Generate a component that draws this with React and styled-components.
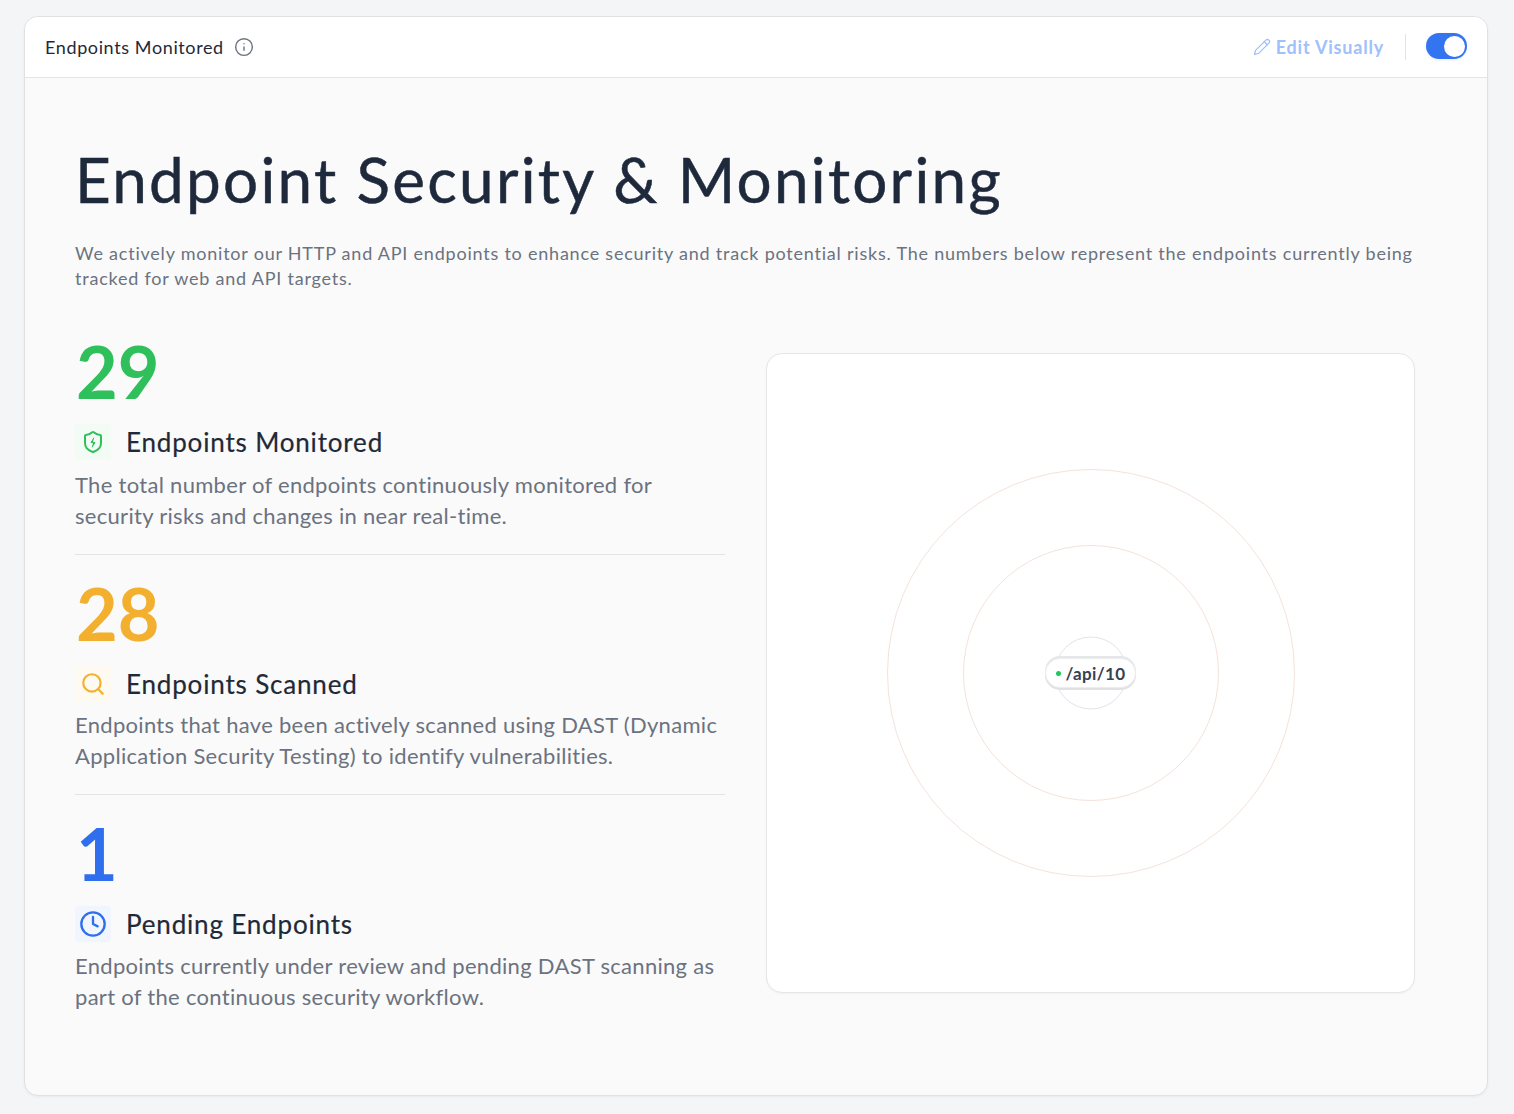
import React from "react";
import styled, { createGlobalStyle } from "styled-components";
import { Info, Pencil, Search, Clock } from "lucide-react";

const Global = createGlobalStyle`
  html, body { margin: 0; padding: 0; background: #f4f5f7; }
  body { font-family: "Lato", "Open Sans", sans-serif; }
`;
const Page = styled.div`
  padding: 16px 26px 18px 24px;
  height: 1114px;
  box-sizing: border-box;
`;
const Card = styled.section`
  height: 1080px;
  box-sizing: border-box;
  border: 1px solid #dfe1e5;
  border-radius: 14px;
  background: #fafafa;
  box-shadow: 0 1px 3px rgba(0,0,0,.05);
  overflow: hidden;
  display: flex;
  flex-direction: column;
`;
const Header = styled.header`
  height: 61px;
  box-sizing: border-box;
  flex: none;
  background: #fff;
  border-bottom: 1px solid #e2e4e8;
  display: flex;
  align-items: center;
  justify-content: space-between;
  padding: 0 20px;
`;
const HeaderTitle = styled.div`
  display: flex;
  align-items: center;
  gap: 10px;
  font-size: 18px;
  color: #1f2937;
  letter-spacing: 0.62px;
  svg { color: #6b7280; }
`;
const HeaderActions = styled.div`
  display: flex;
  align-items: center;
`;
const EditButton = styled.div`
  display: flex;
  align-items: center;
  gap: 5px;
  font-size: 18px;
  font-weight: 700;
  letter-spacing: 0.8px;
  color: #9fc0fb;
  padding-right: 21px;
  border-right: 1px solid #e2e4e8;
  height: 26px;
`;
const Toggle = styled.div`
  margin-left: 20px;
  margin-top: -2px;
  width: 41px;
  height: 26px;
  border-radius: 13px;
  background: #3375f0;
  box-shadow: 0 1px 3px rgba(51,117,240,.15);
  position: relative;
  &::after {
    content: "";
    position: absolute;
    top: 2.5px;
    right: 2.5px;
    width: 21px;
    height: 21px;
    border-radius: 50%;
    background: #fff;
  }
`;
const Body = styled.main`
  padding: 64px 72px 0 50px;
`;
const Title = styled.h1`
  margin: 0;
  font-size: 62px;
  line-height: 74px;
  font-weight: 400;
  color: #1e293b;
  letter-spacing: 2.25px;
  -webkit-text-stroke: 0.5px #1e293b;
`;
const Lead = styled.p`
  margin: 25px 0 0;
  font-size: 18px;
  line-height: 25px;
  color: #6b7280;
  letter-spacing: 0.78px;
`;
const Columns = styled.div`
  margin-top: 46px;
  display: grid;
  grid-template-columns: 650px 649px;
  column-gap: 41px;
  align-items: start;
`;
const Stats = styled.div`
  display: flex;
  flex-direction: column;
  margin-top: -4px;
`;
const Stat = styled.article`
  padding-bottom: 22.5px;
  & + & { border-top: 1px solid #e2e4e8; padding-top: 20px; padding-bottom: 23px; }
`;
const Value = styled.div`
  font-size: 72px;
  line-height: 76px;
  font-weight: 700;
  color: ${p => p.$color};
  padding-left: 1px;
  height: 82px;
`;
const StatHead = styled.div`
  display: flex;
  align-items: center;
  gap: 15px;
  height: 36px;
  margin-top: 9px;
`;
const IconBox = styled.div`
  width: 36px;
  height: 36px;
  border-radius: 4px;
  background: ${p => p.$bg};
  color: ${p => p.$color};
  display: flex;
  align-items: center;
  justify-content: center;
`;
const StatTitle = styled.h2`
  margin: 0;
  font-size: 26px;
  font-weight: 400;
  color: #1f2937;
  letter-spacing: 0.83px;
  -webkit-text-stroke: 0.2px #1f2937;
`;
const StatText = styled.p`
  margin: 9px 0 0;
  font-size: 22px;
  line-height: 31px;
  color: #6b7280;
  letter-spacing: 0.3px;
  ${Stat} + ${Stat} & { margin-top: 7.5px; }
`;
const Visual = styled.div`
  height: 640px;
  box-sizing: border-box;
  border: 1px solid #e4e6e9;
  border-radius: 16px;
  background: #fff;
  display: flex;
  align-items: center;
  justify-content: center;
  position: relative;
  margin-top: 16px;
  box-shadow: 0 1px 2px rgba(0,0,0,.04);
`;
const Ring = styled.div`
  position: absolute;
  left: 50%;
  top: 50%;
  width: ${p => p.$size}px;
  height: ${p => p.$size}px;
  transform: translate(-50%, -50%);
  border-radius: 50%;
  border: 1px solid ${p => p.$color};
  box-sizing: border-box;
`;
const Pill = styled.div`
  position: relative;
  display: flex;
  align-items: center;
  gap: 5px;
  height: 30px;
  padding: 0 10px 0 10px;
  box-sizing: border-box;
  border: 1px solid #eceded;
  border-radius: 15px;
  background: #fff;
  box-shadow: 0 -2px 0 #e5e7eb, 0 2px 0 #dfe1e5;
  font-size: 17px;
  font-weight: 700;
  letter-spacing: 0.35px;
  color: #374151;
`;
const Dot = styled.span`
  width: 5px;
  height: 5px;
  border-radius: 50%;
  background: #22c55e;
`;

const ShieldBolt = () => (
  <svg width="24" height="24" viewBox="0 0 24 24" fill="none" stroke="currentColor" strokeWidth="2" strokeLinejoin="round" strokeLinecap="round">
    <path d="M20 13c0 5-3.5 7.5-7.66 8.95a1 1 0 0 1-.67-.01C7.5 20.5 4 18 4 13V6a1 1 0 0 1 1-1c2 0 4.5-1.2 6.24-2.72a1.17 1.17 0 0 1 1.52 0C14.51 3.81 17 5 19 5a1 1 0 0 1 1 1z" />
    <path d="M12.8 8 10 12.6h4L11.2 17" fill="currentColor" strokeWidth="1" />
  </svg>
);

const stats = [
  { v: "29", c: "#2fbf5b", bg: "#f3fbf5", icon: <ShieldBolt />, t: "Endpoints Monitored", d: "The total number of endpoints continuously monitored for security risks and changes in near real-time." },
  { v: "28", c: "#f3b02f", bg: "#fefaf2", icon: <Search size={26} />, t: "Endpoints Scanned", d: "Endpoints that have been actively scanned using DAST (Dynamic Application Security Testing) to identify vulnerabilities." },
  { v: "1", c: "#2f6fed", bg: "#f1f6fe", icon: <Clock size={28} />, t: "Pending Endpoints", d: "Endpoints currently under review and pending DAST scanning as part of the continuous security workflow." },
];

export default function App() {
  return (
    <Page>
      <Global />
      <Card>
        <Header>
          <HeaderTitle>Endpoints Monitored <Info size={20} strokeWidth={1.7} /></HeaderTitle>
          <HeaderActions>
            <EditButton><Pencil size={18} strokeWidth={1.7} />Edit Visually</EditButton>
            <Toggle />
          </HeaderActions>
        </Header>
        <Body>
          <Title>Endpoint Security &amp; Monitoring</Title>
          <Lead>We actively monitor our HTTP and API endpoints to enhance security and track potential risks. The numbers below represent the endpoints currently being tracked for web and API targets.</Lead>
          <Columns>
            <Stats>
              {stats.map((s) => (
                <Stat key={s.t}>
                  <Value $color={s.c}>{s.v}</Value>
                  <StatHead>
                    <IconBox $bg={s.bg} $color={s.c}>{s.icon}</IconBox>
                    <StatTitle>{s.t}</StatTitle>
                  </StatHead>
                  <StatText>{s.d}</StatText>
                </Stat>
              ))}
            </Stats>
            <Visual>
              <Ring $size={408} $color="#f4e3da" />
              <Ring $size={256} $color="#f4e3da" />
              <Ring $size={73} $color="#e2e4e7" />
              <Pill><Dot />/api/10</Pill>
            </Visual>
          </Columns>
        </Body>
      </Card>
    </Page>
  );
}
